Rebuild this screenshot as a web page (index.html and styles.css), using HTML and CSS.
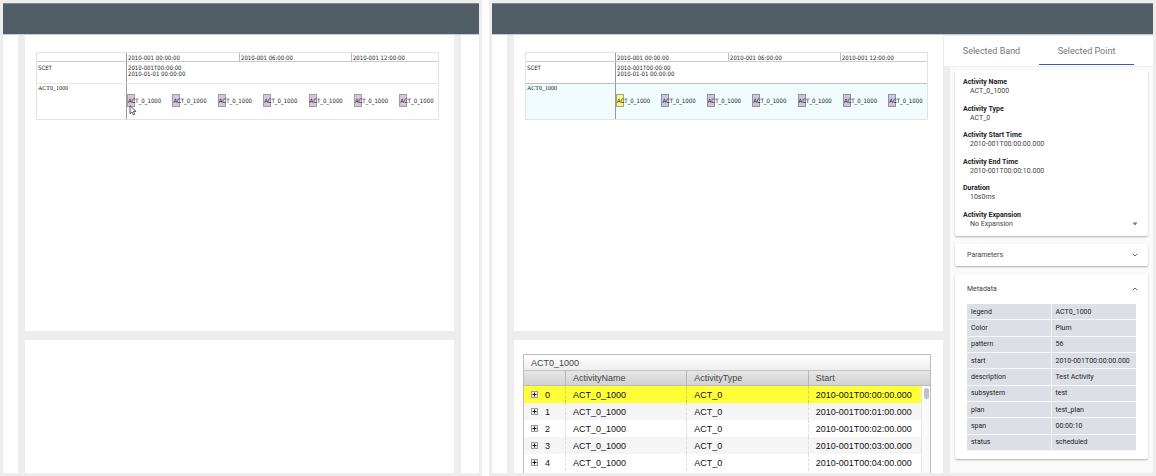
FILE: index.html
```
<!DOCTYPE html>
<html lang="en">
<head>
<meta charset="utf-8">
<title>Activity timelines</title>
<link rel="stylesheet" href="styles.css">
<script src="app.js" defer></script>
</head>
<body>
<section class="window">
  <header class="toolbar"></header>
  <div class="body">
    <nav class="rail"></nav>
    <main class="stack">
      <section class="pane pane-top">
        <div class="timeline">
          <div class="line scale"><div class="name"></div><div class="ticks"><span>2010-001 00:00:00</span><span>2010-001 06:00:00</span><span>2010-001 12:00:00</span></div></div>
          <div class="line clock"><div class="name">SCET</div><div class="track">2010-001T00:00:00<br>2010-01-01 00:00:00</div></div>
          <div class="line band"><div class="name legend">ACT0_1000</div><div class="track acts"></div></div>
          <svg class="pointer" viewBox="0 0 8 11"><path d="M1 .7v8l2-1.8 1.3 3 1.5-.7-1.4-2.8h2.7z" fill="#fff" stroke="#333" stroke-width=".8"/></svg>
        </div>
      </section>
      <section class="pane pane-bottom"></section>
    </main>
    <aside class="edge"></aside>
  </div>
</section>

<section class="window">
  <header class="toolbar"></header>
  <div class="body">
    <nav class="rail"></nav>
    <main class="stack">
      <section class="pane pane-top">
        <div class="timeline selected">
          <div class="line scale"><div class="name"></div><div class="ticks"><span>2010-001 00:00:00</span><span>2010-001 06:00:00</span><span>2010-001 12:00:00</span></div></div>
          <div class="line clock"><div class="name">SCET</div><div class="track">2010-001T00:00:00<br>2010-01-01 00:00:00</div></div>
          <div class="line band"><div class="name legend">ACT0_1000</div><div class="track acts"></div></div>
        </div>
      </section>
      <section class="pane pane-bottom">
        <div class="datagrid">
          <h2 class="grid-title">ACT0_1000</h2>
          <table class="grid">
            <colgroup><col class="c-id"><col class="c-mid"><col class="c-mid"><col class="c-mid"></colgroup>
            <thead><tr><th></th><th>ActivityName</th><th>ActivityType</th><th>Start</th></tr></thead>
            <tbody id="rows"></tbody>
          </table>
          <div class="scrollbar"><div class="thumb"></div></div>
        </div>
      </section>
    </main>
    <aside class="details">
      <div class="tabs" role="tablist">
        <button class="tab" role="tab">Selected Band</button>
        <button class="tab active" role="tab" aria-selected="true">Selected Point</button>
      </div>
      <div class="cards">
        <div class="card info">
          <div><h3>Activity Name</h3><p>ACT_0_1000</p></div>
          <div><h3>Activity Type</h3><p>ACT_0</p></div>
          <div><h3>Activity Start Time</h3><p>2010-001T00:00:00.000</p></div>
          <div><h3>Activity End Time</h3><p>2010-001T00:00:10.000</p></div>
          <div><h3>Duration</h3><p>10s0ms</p></div>
          <div><h3><label for="expansion">Activity Expansion</label></h3>
            <div class="choice"><select id="expansion"><option>No Expansion</option></select><svg viewBox="0 0 6 4"><path d="M.5.5h5L3 3.5z" fill="#757575"/></svg></div></div>
        </div>
        <div class="card">
          <button class="fold" aria-expanded="false">Parameters<svg viewBox="0 0 6 4"><path d="M.7.7 3 3 5.3.7" fill="none" stroke="#666"/></svg></button>
        </div>
        <div class="card open">
          <button class="fold" aria-expanded="true">Metadata<svg viewBox="0 0 6 4"><path d="M.7 3.3 3 1l2.3 2.3" fill="none" stroke="#666"/></svg></button>
          <table class="meta">
            <tr><th>legend</th><td>ACT0_1000</td></tr>
            <tr><th>Color</th><td>Plum</td></tr>
            <tr><th>pattern</th><td>56</td></tr>
            <tr><th>start</th><td>2010-001T00:00:00.000</td></tr>
            <tr><th>description</th><td>Test Activity</td></tr>
            <tr><th>subsystem</th><td>test</td></tr>
            <tr><th>plan</th><td>test_plan</td></tr>
            <tr><th>span</th><td>00:00:10</td></tr>
            <tr><th>status</th><td>scheduled</td></tr>
          </table>
        </div>
      </div>
    </aside>
  </div>
</section>
</body>
</html>
```
FILE: styles.css
```
* { box-sizing: border-box; }
body {
  margin: 0;
  height: 100vh;
  display: grid;
  grid-template-columns: 482fr 667fr;
  gap: 7px;
  background: #fff;
  overflow: hidden;
  font-family: Roboto, sans-serif;
  color: #222;
}
h2, h3, p { margin: 0; }
button, select { font: inherit; color: inherit; background: none; border: 0; padding: 0; margin: 0; }

.window {
  display: flex;
  flex-direction: column;
  min-width: 0;
  min-height: 0;
  padding: 3px;
  background: #ededed;
}
.toolbar {
  flex: none;
  height: 32px;
  background: #515e66;
  border-top: 1px solid #7d878c;
  border-bottom: 1px solid #c5cbce;
}
.body { flex: 1; min-height: 0; display: flex; }
.rail { flex: none; width: 15px; margin-right: 7px; background: #fff; }
.edge { flex: none; width: 18px; margin-left: 7px; background: #fff; }
.stack { flex: 1; min-width: 0; display: grid; grid-template-rows: 297fr 133fr; gap: 9px; }
.pane { background: #fff; min-height: 0; min-width: 0; }
.pane-top { padding: 17px 15px 0 11px; }
.pane-bottom { overflow: hidden; padding: 14px 12px 0 9px; }

.timeline {
  position: relative;
  border: 1px solid #e3e3e3;
  font: 6px/6px "DejaVu Sans Condensed", "DejaVu Sans", sans-serif;
  color: #222;
}
.line { display: grid; grid-template-columns: 90px 1fr; }
.scale { height: 9px; border-bottom: 1px solid #ccc; }
.clock { height: 22px; border-bottom: 1px solid #e6e6e6; }
.band { height: 35px; }
.selected .clock { border-bottom-color: #b4c2c4; }
.selected .band { background: #f0fcfe; }
.name { padding: 3px 1px 0; border-right: 1px solid #999; }
.legend { padding-top: 1px; font-family: "Liberation Serif", serif; }
.ticks { display: grid; grid-template-columns: 36% 36% 1fr; white-space: nowrap; }
.ticks span { padding: 2px 0 0 1px; border-left: 1px solid #bbb; }
.ticks span:first-child { border-left: 0; }
.clock .track { padding: 3px 0 0 1px; }
.acts {
  display: grid;
  grid-template-columns: repeat(7, 14.6%);
  align-content: start;
  padding-top: 10px;
  width: 100%;
}
.act {
  width: 8px;
  height: 13px;
  line-height: 11px;
  white-space: nowrap;
  background: #d5c5de;
  border: 1px solid #a399a9;
}
.selected .act { background: #cbc4dc; border-color: #948fa2; }
.selected .act:first-child { background: #f8f98c; border-color: #a5a670; }
.pointer { position: absolute; left: 92px; top: 52px; width: 8px; height: 11px; }

.datagrid {
  position: relative;
  min-height: 100%;
  border: 1px solid #bdbdbd;
  border-bottom: 0;
  font-family: "Liberation Sans", sans-serif;
  font-size: 9px;
}
.grid-title {
  height: 15px;
  padding-left: 7px;
  font-size: 9px;
  font-weight: 400;
  line-height: 16px;
  color: #444;
  background: linear-gradient(#fff, #eee);
}
.grid { width: 100%; table-layout: fixed; border-collapse: separate; border-spacing: 0; }
.c-id { width: 42px; }
.grid th {
  height: 16px;
  padding: 0 0 0 7px;
  text-align: left;
  font-weight: 400;
  color: #444;
  border-top: 1px solid #c4c4c4;
  border-bottom: 1px solid #bbb;
  border-right: 1px solid #b5b5b5;
  background: linear-gradient(#e6e6e6, #d2d2d2);
}
.grid td {
  height: 17px;
  padding: 0 0 0 7px;
  color: #111;
  white-space: nowrap;
  border-right: 1px dashed #ddd;
}
.grid th:last-child, .grid td:last-child { border-right: 0; }
.grid tbody tr:nth-child(even) { background: #f5f5f5; }
.grid tbody tr.picked { background: #ffff38; }
.grid tbody tr.picked td { border-right-color: #d6d638; }
.rowid { display: flex; align-items: center; gap: 7px; }
.expand { display: flex; }
.expand svg { width: 7px; height: 7px; }
.scrollbar {
  position: absolute;
  top: 31px;
  right: 0;
  bottom: 0;
  width: 9px;
  padding: 2px;
  background: #fafafa;
  border-left: 1px solid #e8e8e8;
}
.thumb { height: 11px; width: 5px; border-radius: 3px; background: #c1c1c1; }

.details {
  flex: none;
  width: 210px;
  display: flex;
  flex-direction: column;
  padding: 1px 0 0 1px;
  font-size: 7px;
}
.tabs { flex: none; display: flex; height: 31px; padding-right: 19px; background: #fff; border-bottom: 1px solid #eee; }
.tab { flex: 1; font-size: 9px; color: #777; border-bottom: 1px solid transparent; }
.tab.active { box-shadow: inset 0 -1px #4554a8; }
.cards {
  flex: 1;
  min-height: 0;
  display: flex;
  flex-direction: column;
  gap: 8px;
  margin-left: 6px;
  padding: 3px 5px 0;
  background: #fafafa;
}
.card { background: #fff; border-radius: 2px; box-shadow: 0 1px 2px rgba(0, 0, 0, .3); }
.info {
  min-height: 166px;
  padding: 8px 8px 7px;
  display: flex;
  flex-direction: column;
  justify-content: space-between;
}
.info h3 { font-size: 7px; line-height: 9px; font-weight: 700; }
.info p { padding-left: 7px; line-height: 9px; color: #444; }
.choice { display: flex; align-items: center; height: 9px; padding-left: 7px; color: #444; }
.choice select { flex: 1; appearance: none; }
.choice svg, .fold svg { width: 6px; height: 4px; margin-right: 2px; }
.fold {
  width: 100%;
  height: 22px;
  padding: 0 8px 0 12px;
  display: flex;
  align-items: center;
  justify-content: space-between;
  color: #444;
}
.open { padding-bottom: 8px; }
.open .fold { height: 30px; }
.meta {
  width: calc(100% - 24px);
  height: 147px;
  margin: 0 12px;
  table-layout: fixed;
  border-collapse: separate;
  border-spacing: 0;
}
.meta th, .meta td {
  padding: 0 0 0 4px;
  text-align: left;
  font-weight: 400;
  white-space: nowrap;
  background: #dcdfe6;
  border-bottom: 1px solid #f8f8fa;
}
.meta th { border-right: 1px solid #f0f1f4; }
```
FILE: app.js
```
for (const track of document.querySelectorAll('.acts')) {
  for (let i = 0; i < 7; i++) {
    const act = document.createElement('div');
    act.className = 'act';
    act.textContent = 'ACT_0_1000';
    track.append(act);
  }
}

const plus = '<svg viewBox="0 0 7 7"><rect x=".5" y=".5" width="6" height="6" fill="#eee" stroke="#999"/><path d="M3.5 1.5v4M1.5 3.5h4" stroke="#111"/></svg>';
const rows = document.getElementById('rows');
for (let i = 0; i < 5; i++) {
  const row = document.createElement('tr');
  if (i === 0) row.className = 'picked';
  row.innerHTML = `<td><div class="rowid"><button class="expand" aria-label="Expand row ${i}">${plus}</button>${i}</div></td><td>ACT_0_1000</td><td>ACT_0</td><td>2010-001T00:0${i}:00.000</td>`;
  rows.append(row);
}
```
